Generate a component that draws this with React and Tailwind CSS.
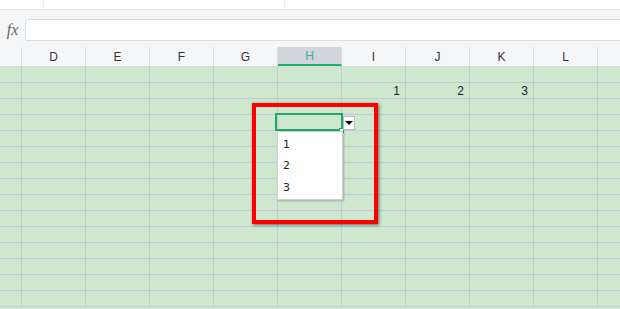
import React from "react";

const COLS = ["D", "E", "F", "G", "H", "I", "J", "K", "L", ""];
const ROWS = 15;

function Cell({ children, w = "w-[64px]", extra = "" }) {
  return (
    <div
      className={`${w} shrink-0 h-full border-r border-[#c3c9d5] flex items-end justify-end pr-[5px] pb-[1px] text-[12px] leading-none text-[#222] ${extra}`}
    >
      {children}
    </div>
  );
}

export default function App() {
  const values = { 1: { I: "1", J: "2", K: "3" } };
  return (
    <div
      className="relative w-[620px] h-[309px] overflow-hidden bg-[#cde8cf]"
      style={{ fontFamily: '"Liberation Sans", Arial, sans-serif' }}
    >
      {/* top toolbar */}
      <div className="flex h-[10px] bg-white border-b border-[#e3e5e9]">
        <div className="w-[44px] border-r border-[#eceef1]" />
        <div className="w-[241px] border-r border-[#eceef1]" />
        <div className="flex-1" />
      </div>
      {/* formula bar */}
      <div className="h-[37px] bg-[#f5f6f8] flex items-start pt-[9px]">
        <div
          className="w-[25px] h-[22px] flex items-center justify-center text-[16px] italic text-[#666]"
          style={{ fontFamily: '"Liberation Serif", serif' }}
        >
          fx
        </div>
        <div className="flex-1 h-[22px] mr-[-6px] bg-white border border-[#d9dce1] rounded-[2px]" />
      </div>
      {/* column header */}
      <div className="flex h-[20px] bg-[#f5f6f8] border-b border-[#d4d7dd]">
        <div className="w-[22px] shrink-0 border-r border-[#d9dce1]" />
        {COLS.map((c, i) => (
          <div
            key={i}
            className={`w-[64px] shrink-0 border-r border-[#d9dce1] flex items-center justify-center text-[12px] ${
              c === "H"
                ? "bg-[#d3d5db] text-[#2fb58e] border-b-2 border-b-[#1fb06a]"
                : "text-[#333]"
            }`}
          >
            {c}
          </div>
        ))}
      </div>
      {/* grid body */}
      <div className="flex flex-col">
        {Array.from({ length: ROWS }).map((_, r) => (
          <div key={r} className="flex h-[16px] border-b border-[#c3c9d5]">
            <Cell w="w-[22px]" />
            {COLS.map((c, i) => (
              <Cell key={i}>{values[r] && values[r][c]}</Cell>
            ))}
          </div>
        ))}
      </div>

      {/* red highlight rectangle */}
      <div className="absolute left-[252px] top-[103px] w-[126px] h-[121px] border-[4px] border-[#ff0000] shadow-[1px_1px_3px_rgba(0,0,0,0.55)]" />

      {/* selected cell */}
      <div className="absolute left-[275px] top-[113px] w-[68px] h-[18px] border-2 border-[#1fa86a]" />
      <div className="absolute left-[339px] top-[128px] w-[5px] h-[5px] bg-white border border-[#1fa86a]" />

      {/* dropdown button */}
      <div className="absolute left-[343px] top-[116px] w-[12px] h-[14px] bg-white border border-[#b8bcc4] flex items-center justify-center">
        <div className="w-0 h-0 border-l-[4px] border-r-[4px] border-t-[4px] border-l-transparent border-r-transparent border-t-black" />
      </div>

      {/* dropdown list */}
      <div className="absolute left-[277px] top-[131px] w-[66px] h-[69px] bg-white border border-[#d0d0d0] shadow-[1px_1px_2px_rgba(0,0,0,0.25)] flex flex-col pt-[2px]">
        {["1", "2", "3"].map((v) => (
          <div
            key={v}
            className="h-[22.5px] flex items-center pl-[5px] text-[11px] text-[#222]"
            style={{ fontFamily: '"DejaVu Sans", sans-serif' }}
          >
            {v}
          </div>
        ))}
      </div>
    </div>
  );
}
